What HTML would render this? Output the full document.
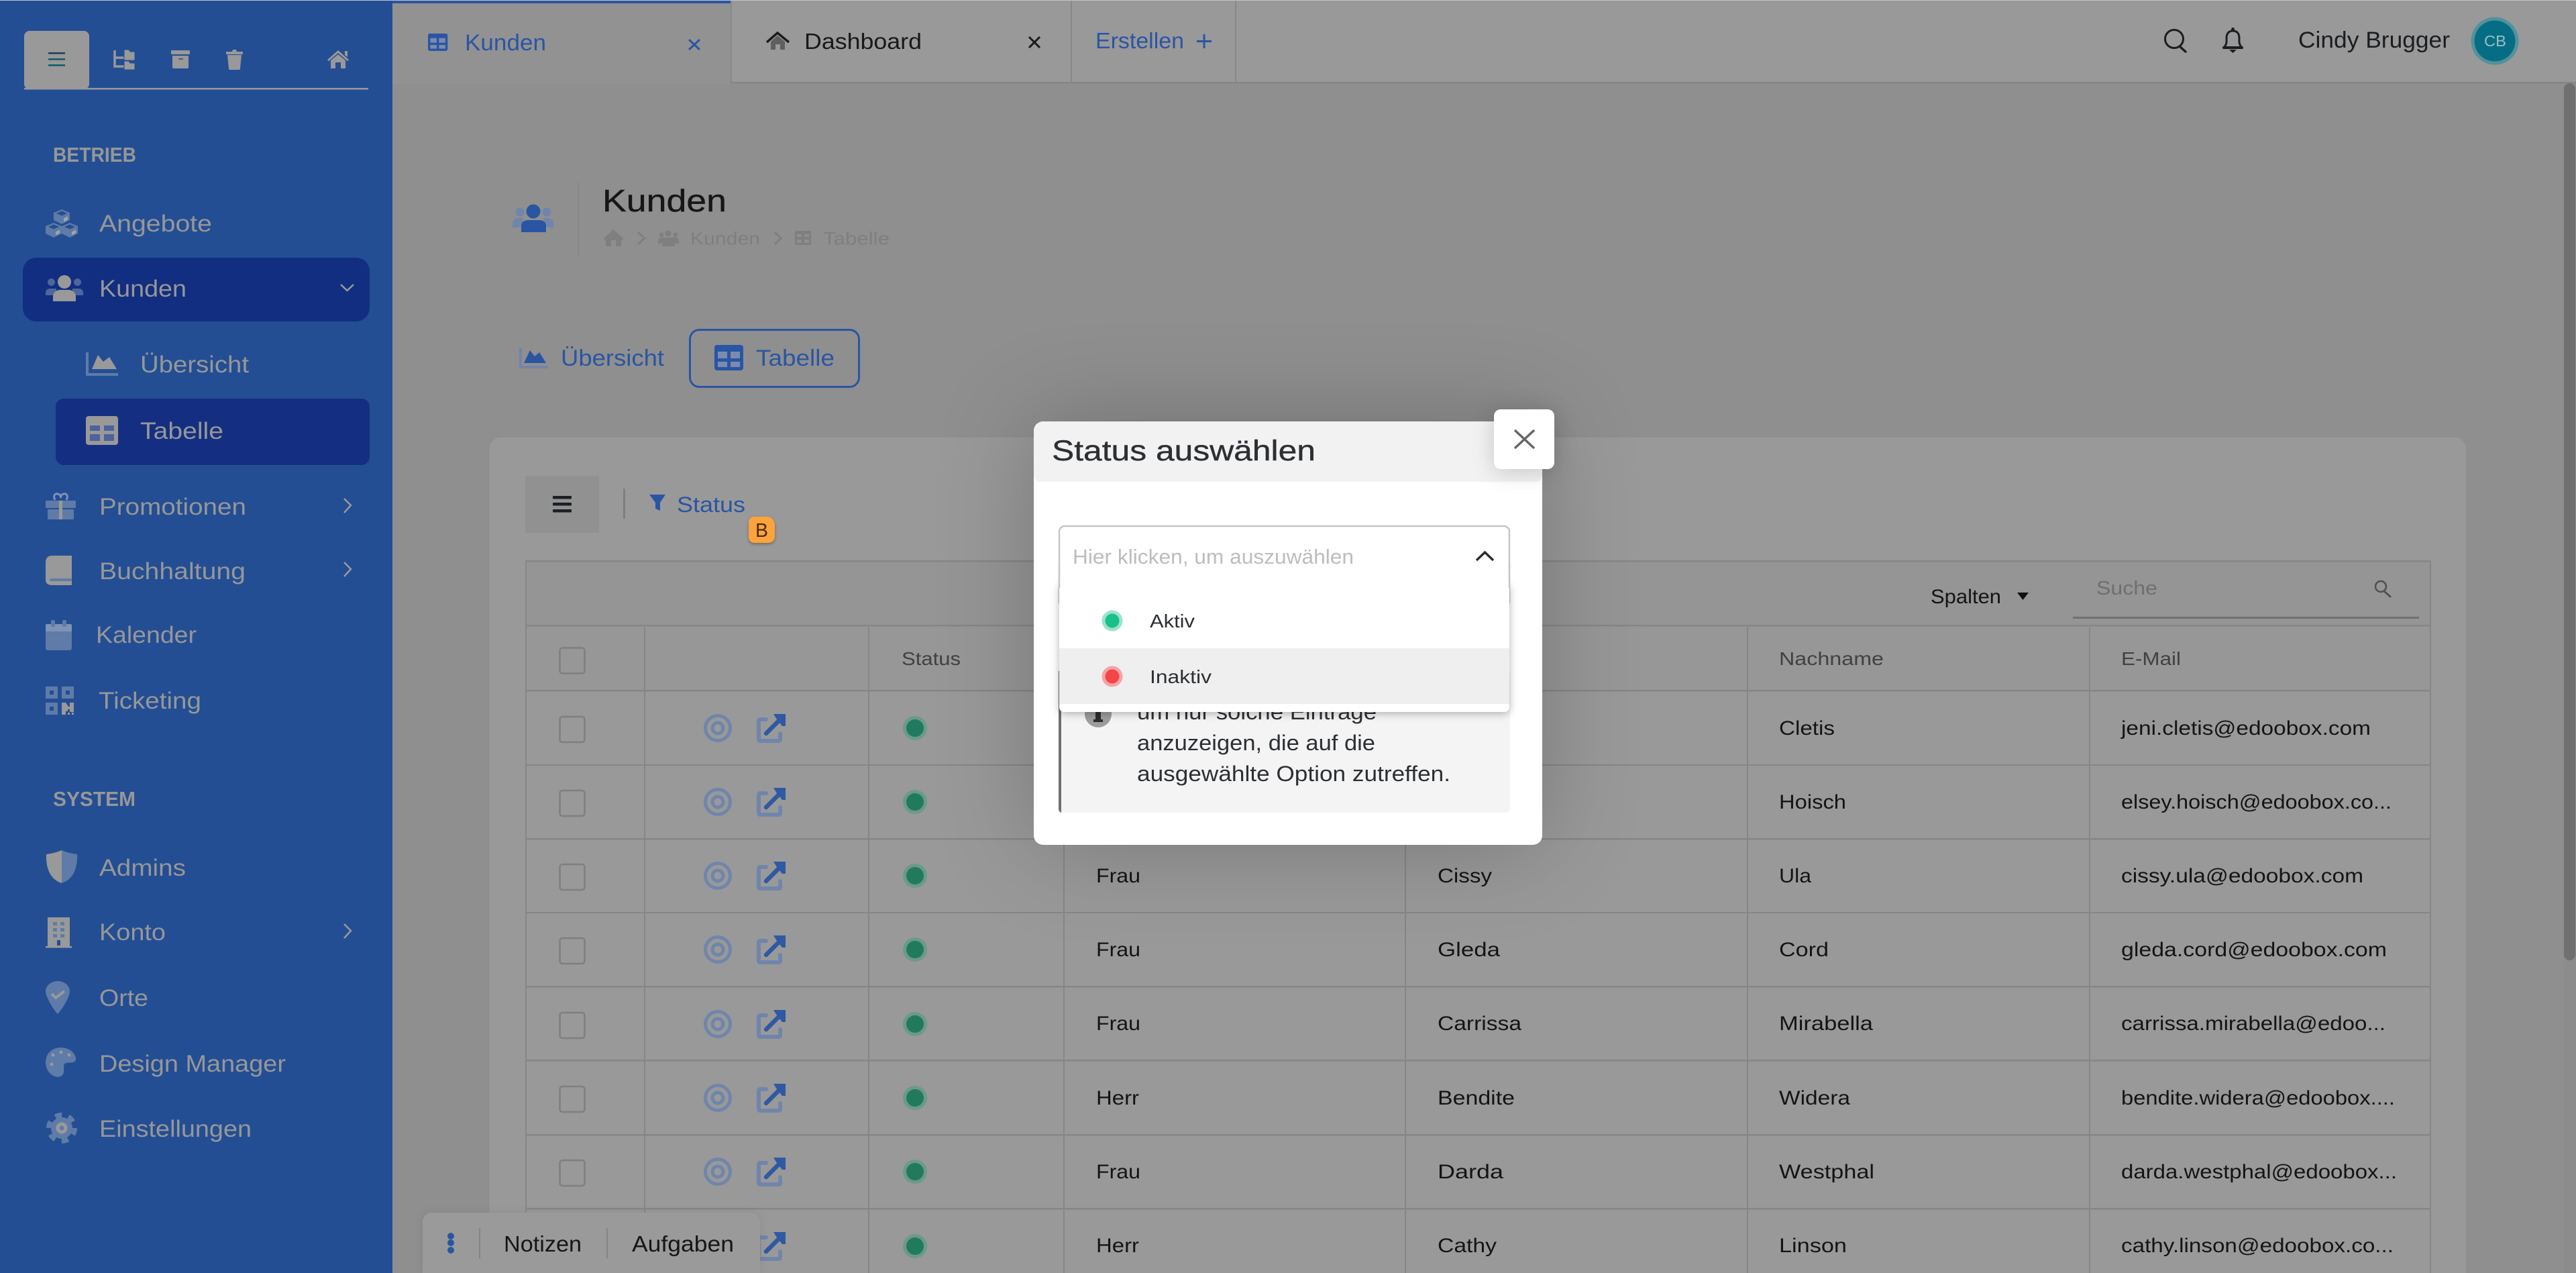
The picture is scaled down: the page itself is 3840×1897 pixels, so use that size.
<!DOCTYPE html>
<html lang="de">
<head>
<meta charset="utf-8">
<title>Kunden</title>
<style>
html,body{margin:0;padding:0;background:#8f8f8f;width:3840px;height:1897px;overflow:hidden}
svg{display:block;position:absolute;left:0;top:0}
text{font-family:"Liberation Sans",sans-serif;white-space:pre}
.s{font-size:35px;fill:#979797}
.h{font-size:31px;font-weight:bold;fill:#979797}
.t{font-size:30px;fill:#141414}
.b{fill:#2a55a3}
</style>
</head>
<body>
<svg width="3840" height="1897" viewBox="0 0 3840 1897" xmlns="http://www.w3.org/2000/svg">
<defs>
<g id="cube">
  <polygon points="12,0 24,5 24,16 12,22 0,16 0,5" fill="#5f7ba8"/>
  <polygon points="12,2.5 20,6 12,9.5 4,6" fill="#24508f"/>
  <polygon points="15,13.5 21,10.5 21,15.5 15,18.5" fill="#a5a5a5"/>
</g>
<g id="rowicons">
  <rect x="834.5" y="-17" width="37" height="38" rx="4" fill="none" stroke="#7f7f7f" stroke-width="2.5"/>
  <circle cx="1070" cy="0" r="18.5" fill="none" stroke="#7085ab" stroke-width="5"/>
  <circle cx="1070" cy="0" r="8" fill="none" stroke="#7085ab" stroke-width="5"/>
  <path d="M1142,-13H1133a2,2 0 0 0 -2,2V17a2,2 0 0 0 2,2H1161a2,2 0 0 0 2,-2V8" fill="none" stroke="#7085ab" stroke-width="6" stroke-linecap="round"/>
  <path d="M1142,8L1163,-13" fill="none" stroke="#2f59a2" stroke-width="6.5" stroke-linecap="round"/>
  <polygon points="1153,-21 1171,-21 1171,-3 1166,-3 1158,-13" fill="#2f59a2"/>
  <circle cx="1364" cy="0" r="18" fill="#6b9a88"/>
  <circle cx="1364" cy="0" r="13" fill="#227a5e"/>
</g>
<g id="tbl">
  <rect x="0" y="0" width="43" height="38" rx="4" fill="#2a55a3"/>
  <rect x="5" y="10" width="14" height="10" fill="#7a8cae"/><rect x="24" y="10" width="14" height="10" fill="#7a8cae"/>
  <rect x="5" y="25" width="14" height="8" fill="#7a8cae"/><rect x="24" y="25" width="14" height="8" fill="#7a8cae"/>
</g>
</defs>

<!-- page background -->
<rect width="3840" height="1897" fill="#8f8f8f"/>

<!-- top bar -->
<rect x="585" y="0" width="3255" height="122" fill="#999"/>
<rect x="585" y="122" width="3255" height="2.5" fill="#858585"/>
<rect x="585" y="0" width="504" height="125" fill="#929292"/>
<rect x="585" y="1" width="504" height="4" fill="#2a55a3"/>
<rect x="1089" y="0" width="2" height="122" fill="#888"/>
<rect x="1596" y="0" width="2" height="122" fill="#888"/>
<rect x="1841" y="0" width="2" height="122" fill="#888"/>

<use href="#tbl" transform="translate(638,50) scale(.68,.68)"/>
<text x="693" y="75" font-size="34" class="b" textLength="121" lengthAdjust="spacingAndGlyphs">Kunden</text>
<path d="M1027,59L1043,74M1043,59L1027,74" stroke="#2a55a3" stroke-width="3" fill="none"/>
<path d="M1143,63L1159,49L1176,63" fill="none" stroke="#1c1c1c" stroke-width="3.5"/>
<path d="M1149,62L1159,53L1170,62V74H1163V66H1156V74H1149Z" fill="#5f5f5f"/>
<text x="1199" y="73" font-size="33" fill="#191919" textLength="175" lengthAdjust="spacingAndGlyphs">Dashboard</text>
<path d="M1534,55L1550,71M1550,55L1534,71" stroke="#191919" stroke-width="3" fill="none"/>
<text x="1633" y="72" font-size="33" class="b" textLength="132" lengthAdjust="spacingAndGlyphs">Erstellen</text>
<path d="M1795,51V72M1784,61.5H1806" stroke="#2a55a3" stroke-width="3" fill="none"/>

<circle cx="3241" cy="58" r="13.5" fill="none" stroke="#1b1d20" stroke-width="3"/>
<path d="M3249,69L3258,77" stroke="#1b1d20" stroke-width="3.5" stroke-linecap="round"/>
<path d="M3315,71C3320,65 3319,62 3319,57C3319,49 3323,46 3328.500,46C3334,46 3338,49 3338,57C3338,62 3337,65 3342,71Z" fill="none" stroke="#1b1d20" stroke-width="3" stroke-linejoin="round"/>
<rect x="3313" y="69" width="31" height="4" rx="2" fill="#1b1d20"/>
<circle cx="3328.500" cy="43.500" r="2.500" fill="#1b1d20"/><path d="M3323,74H3334L3328.500,79Z" fill="#1b1d20"/>
<text x="3426" y="71" font-size="34" fill="#1b1d20" textLength="226" lengthAdjust="spacingAndGlyphs">Cindy Brugger</text>
<circle cx="3719" cy="61" r="35.500" fill="#54919c"/>
<circle cx="3719" cy="61" r="30.500" fill="#056e84"/>
<text x="3703" y="69" font-size="23" fill="#9cbcc4" textLength="33" lengthAdjust="spacingAndGlyphs">CB</text>

<!-- scrollbar -->
<rect x="3822" y="124" width="18" height="1773" fill="#8c8c8c"/>
<rect x="3822" y="124" width="17" height="1307" rx="8.500" fill="#707070"/>

<!-- page title -->
<circle cx="775" cy="316" r="6.500" fill="#7085ab"/><circle cx="815" cy="316" r="6.500" fill="#7085ab"/>
<path d="M764,340V333C764,328 768,325 772,325H780V337ZM825,340V333C825,328 821,325 817,325H810V337Z" fill="#7085ab"/>
<circle cx="795" cy="315" r="10.500" fill="#2a55a3"/>
<path d="M777,346V336C777,331 782,328 788,328H803C809,328 814,331 814,336V346Z" fill="#2a55a3"/>
<rect x="861" y="271" width="2" height="111" fill="#888"/>
<text x="898" y="315" font-size="46" fill="#161616" stroke="#161616" stroke-width=".4" textLength="185" lengthAdjust="spacingAndGlyphs">Kunden</text>

<path d="M899,356L914,342L930,356L926,358V367H918V358H911V367H903V358Z" fill="#7f7f7f"/>
<path d="M951,346L961,355L951,364" fill="none" stroke="#7f7f7f" stroke-width="3"/>
<circle cx="996" cy="348" r="4.500" fill="#7f7f7f"/><circle cx="986" cy="350" r="3.500" fill="#7f7f7f"/><circle cx="1007" cy="350" r="3.500" fill="#7f7f7f"/>
<path d="M981,364V358C981,355 984,354 987,354H1006C1009,354 1012,355 1012,358V364L1006,362V367H987V362Z" fill="#7f7f7f"/>
<text x="1029" y="364.500" font-size="27" fill="#7f7f7f" textLength="104" lengthAdjust="spacingAndGlyphs">Kunden</text>
<path d="M1155,346L1164,355L1155,364" fill="none" stroke="#7f7f7f" stroke-width="3"/>
<rect x="1185" y="344" width="24" height="21" rx="2" fill="#7f7f7f"/>
<path d="M1188,349H1195V353H1188ZM1199,349H1206V353H1199ZM1188,357H1195V362H1188ZM1199,357H1206V362H1199Z" fill="#8f8f8f"/>
<text x="1227" y="364.500" font-size="27" fill="#7f7f7f" textLength="99" lengthAdjust="spacingAndGlyphs">Tabelle</text>

<!-- sub tabs -->
<path d="M774,518H778V545H817V549H774Z" fill="#7085ab"/>
<path d="M781,541L790,522L797,531L804,525L814,541Z" fill="#2a55a3"/>
<text x="836" y="545" font-size="34" class="b" textLength="154" lengthAdjust="spacingAndGlyphs">Übersicht</text>
<rect x="1028.500" y="491.500" width="252" height="85" rx="14" fill="none" stroke="#2a55a3" stroke-width="3"/>
<use href="#tbl" transform="translate(1065,514)"/>
<text x="1127" y="545" font-size="34" class="b" textLength="117" lengthAdjust="spacingAndGlyphs">Tabelle</text>

<!-- card -->
<rect x="729" y="651" width="2948" height="1300" rx="18" fill="#999" stroke="#8c8c8c" stroke-width="1"/>

<rect x="783" y="709" width="110" height="85" fill="#919191"/>
<rect x="824" y="739" width="28" height="4.500" rx="1" fill="#1b1e22"/>
<rect x="824" y="749" width="28" height="4.500" rx="1" fill="#1b1e22"/>
<rect x="824" y="759" width="28" height="4.500" rx="1" fill="#1b1e22"/>
<rect x="929" y="728" width="3" height="45" fill="#7f7f7f"/>
<path d="M968,737H992L984,749V761L977,758V749Z" fill="#2a55a3"/>
<text x="1009" y="763" font-size="32" class="b" textLength="102" lengthAdjust="spacingAndGlyphs">Status</text>
<path d="M1125,772H1142C1150,772 1155,777 1155,785V801C1155,808 1150,811 1144,811H1125C1119,811 1116,807 1116,802V780C1116,775 1120,772 1125,772Z" fill="#4a3a1c" opacity=".5" style="filter:blur(2px)"/>
<path d="M1125,770H1142C1150,770 1155,775 1155,783V799C1155,806 1150,809 1144,809H1125C1119,809 1116,805 1116,800V778C1116,773 1120,770 1125,770Z" fill="#fba33d"/>
<text x="1126" y="800" font-size="29" fill="#4a2800" textLength="19" lengthAdjust="spacingAndGlyphs">B</text>

<!-- table -->
<rect x="785" y="836" width="2838" height="96" fill="#959595"/>
<rect x="785" y="932" width="2838" height="97" fill="#979797"/>
<g fill="#868686">
<rect x="784" y="835" width="2840" height="2.500"/>
<rect x="784" y="931" width="2840" height="2.500"/>
<rect x="784" y="1028" width="2840" height="2.500"/>
<rect x="784" y="1139" width="2840" height="2"/>
<rect x="784" y="1249" width="2840" height="2.500"/>
<rect x="784" y="1359" width="2840" height="2"/>
<rect x="784" y="1469" width="2840" height="2.500"/>
<rect x="784" y="1579" width="2840" height="2.500"/>
<rect x="784" y="1690" width="2840" height="2.500"/>
<rect x="784" y="1800" width="2840" height="2.500"/>
<rect x="783" y="835" width="2" height="1062"/>
<rect x="3622" y="835" width="2" height="1062"/>
<rect x="960" y="934" width="2" height="963"/>
<rect x="1294" y="934" width="2" height="963"/>
<rect x="1585" y="934" width="2" height="963"/>
<rect x="2094" y="934" width="2" height="963"/>
<rect x="2604" y="934" width="2" height="963"/>
<rect x="3114" y="934" width="2" height="963"/>
</g>

<text x="2878" y="899" class="t" fill="#111" textLength="105" lengthAdjust="spacingAndGlyphs">Spalten</text>
<path d="M3007,883H3024L3015.500,894Z" fill="#111"/>
<text x="3125" y="886" font-size="29" fill="#6f6f6f" textLength="91" lengthAdjust="spacingAndGlyphs">Suche</text>
<circle cx="3549" cy="874" r="8" fill="none" stroke="#505050" stroke-width="2.500"/>
<path d="M3554,881L3563,889" stroke="#505050" stroke-width="3" stroke-linecap="round"/>
<rect x="3090" y="919" width="516" height="3" fill="#707070"/>

<rect x="834.500" y="965.500" width="37" height="38" rx="4" fill="none" stroke="#7f7f7f" stroke-width="2.500"/>
<text x="1344" y="991" font-size="28" fill="#414141" textLength="88" lengthAdjust="spacingAndGlyphs">Status</text>
<text x="2652" y="991" font-size="28" fill="#414141" textLength="156" lengthAdjust="spacingAndGlyphs">Nachname</text>
<text x="3162" y="991" font-size="28" fill="#414141" textLength="89" lengthAdjust="spacingAndGlyphs">E-Mail</text>

<use href="#rowicons" y="1085"/><use href="#rowicons" y="1195"/><use href="#rowicons" y="1305"/><use href="#rowicons" y="1415"/>
<use href="#rowicons" y="1526"/><use href="#rowicons" y="1636"/><use href="#rowicons" y="1746"/><use href="#rowicons" y="1857"/>

<g class="rows">
<text class="t" x="2652" y="1095" textLength="83" lengthAdjust="spacingAndGlyphs">Cletis</text>
<text class="t" x="3162" y="1095" textLength="372" lengthAdjust="spacingAndGlyphs">jeni.cletis@edoobox.com</text>
<text class="t" x="2652" y="1205" textLength="100" lengthAdjust="spacingAndGlyphs">Hoisch</text>
<text class="t" x="3162" y="1205" textLength="403" lengthAdjust="spacingAndGlyphs">elsey.hoisch@edoobox.co...</text>

<text class="t" x="1634" y="1315" textLength="66" lengthAdjust="spacingAndGlyphs">Frau</text>
<text class="t" x="2143" y="1315" textLength="81" lengthAdjust="spacingAndGlyphs">Cissy</text>
<text class="t" x="2652" y="1315" textLength="48" lengthAdjust="spacingAndGlyphs">Ula</text>
<text class="t" x="3162" y="1315" textLength="361" lengthAdjust="spacingAndGlyphs">cissy.ula@edoobox.com</text>

<text class="t" x="1634" y="1425" textLength="66" lengthAdjust="spacingAndGlyphs">Frau</text>
<text class="t" x="2143" y="1425" textLength="93" lengthAdjust="spacingAndGlyphs">Gleda</text>
<text class="t" x="2652" y="1425" textLength="74" lengthAdjust="spacingAndGlyphs">Cord</text>
<text class="t" x="3162" y="1425" textLength="396" lengthAdjust="spacingAndGlyphs">gleda.cord@edoobox.com</text>

<text class="t" x="1634" y="1535" textLength="66" lengthAdjust="spacingAndGlyphs">Frau</text>
<text class="t" x="2143" y="1535" textLength="125" lengthAdjust="spacingAndGlyphs">Carrissa</text>
<text class="t" x="2652" y="1535" textLength="140" lengthAdjust="spacingAndGlyphs">Mirabella</text>
<text class="t" x="3162" y="1535" textLength="394" lengthAdjust="spacingAndGlyphs">carrissa.mirabella@edoo...</text>

<text class="t" x="1634" y="1646" textLength="64" lengthAdjust="spacingAndGlyphs">Herr</text>
<text class="t" x="2143" y="1646" textLength="115" lengthAdjust="spacingAndGlyphs">Bendite</text>
<text class="t" x="2652" y="1646" textLength="106" lengthAdjust="spacingAndGlyphs">Widera</text>
<text class="t" x="3162" y="1646" textLength="408" lengthAdjust="spacingAndGlyphs">bendite.widera@edoobox....</text>

<text class="t" x="1634" y="1756" textLength="66" lengthAdjust="spacingAndGlyphs">Frau</text>
<text class="t" x="2143" y="1756" textLength="98" lengthAdjust="spacingAndGlyphs">Darda</text>
<text class="t" x="2652" y="1756" textLength="142" lengthAdjust="spacingAndGlyphs">Westphal</text>
<text class="t" x="3162" y="1756" textLength="411" lengthAdjust="spacingAndGlyphs">darda.westphal@edoobox...</text>

<text class="t" x="1634" y="1866" textLength="64" lengthAdjust="spacingAndGlyphs">Herr</text>
<text class="t" x="2143" y="1866" textLength="88" lengthAdjust="spacingAndGlyphs">Cathy</text>
<text class="t" x="2652" y="1866" textLength="101" lengthAdjust="spacingAndGlyphs">Linson</text>
<text class="t" x="3162" y="1866" textLength="406" lengthAdjust="spacingAndGlyphs">cathy.linson@edoobox.co...</text>
</g>

<!-- bottom bar -->
<path d="M630,1897V1821a14,14 0 0 1 14,-14H1119a14,14 0 0 1 14,14V1897Z" fill="#9a9a9a" style="filter:drop-shadow(0 0 6px rgba(0,0,0,.08))"/>
<circle cx="672" cy="1842" r="5" fill="#2a55a3"/><circle cx="672" cy="1852" r="5" fill="#2a55a3"/><circle cx="672" cy="1863" r="5" fill="#2a55a3"/>
<rect x="714" y="1830" width="2" height="45" fill="#848484"/>
<text x="751" y="1865" font-size="33" fill="#161616" textLength="116" lengthAdjust="spacingAndGlyphs">Notizen</text>
<rect x="904" y="1830" width="2" height="45" fill="#848484"/>
<text x="942" y="1865" font-size="33" fill="#161616" textLength="152" lengthAdjust="spacingAndGlyphs">Aufgaben</text>

<!-- sidebar -->
<rect x="0" y="0" width="585" height="1897" fill="#234e94"/>
<rect x="36" y="46" width="97" height="87" rx="8" fill="#999"/>
<rect x="36" y="131" width="513" height="2.500" fill="#999"/>
<rect x="72" y="78" width="25" height="2.500" fill="#1d3d55"/><rect x="72" y="87" width="25" height="2.500" fill="#0f5a6a"/><rect x="72" y="96" width="25" height="2.500" fill="#0f5a6a"/>

<path d="M171,75V99H185M171,86H185" fill="none" stroke="#999" stroke-width="3.500"/>
<path d="M185,74H192L194,77H201V90H185ZM185,91H192L194,94H201V104H185Z" fill="#999" stroke="#234e94" stroke-width="1"/>
<rect x="255" y="75" width="28" height="6" rx="1" fill="#999"/>
<path d="M257,83H281V100a2,2 0 0 1 -2,2H259a2,2 0 0 1 -2,-2Z" fill="#999"/><rect x="266" y="87" width="7" height="1.500" fill="#234e94"/>
<path d="M337,77H346L347,74H352L353,77H362V81H337ZM339,82H360L358,102a2,2 0 0 1 -2,2H343a2,2 0 0 1 -2,-2Z" fill="#999"/>
<path d="M488,89L504,75L520,89L518,91L504,79L490,91Z" fill="#999"/>
<path d="M514,76H518V85L514,82ZM493,90L504,81L515,90V102H508V93H500V102H493Z" fill="#999"/>

<text class="h" x="79" y="241" textLength="124" lengthAdjust="spacingAndGlyphs">BETRIEB</text>

<use href="#cube" x="80" y="312"/><use href="#cube" x="68" y="332"/><use href="#cube" x="92" y="332"/>
<text class="s" x="148" y="345" textLength="168" lengthAdjust="spacingAndGlyphs">Angebote</text>

<rect x="34" y="384" width="517" height="95" rx="20" fill="#112e80"/>
<circle cx="76.500" cy="420.500" r="5.500" fill="#4e669c"/><circle cx="115.500" cy="420.500" r="5.500" fill="#4e669c"/>
<path d="M68,440V436C68,432 71,430 75,430H84V440ZM124,440V436C124,432 121,430 117,430H108V440Z" fill="#4e669c"/>
<circle cx="96" cy="420" r="10" fill="#999"/>
<path d="M79,449V442C79,436 84,432 90,432H102C108,432 113,436 113,442V449Z" fill="#999"/>
<text class="s" x="148" y="442" textLength="130" lengthAdjust="spacingAndGlyphs">Kunden</text>
<path d="M508,424L517.500,433L527,424" fill="none" stroke="#999" stroke-width="2.500"/>

<path d="M128,525H132V556H176V560H128Z" fill="#5f7ba8"/>
<path d="M137,550L146,529L154,539L163,532L174,550Z" fill="#999"/>
<text class="s" x="209" y="555" textLength="162" lengthAdjust="spacingAndGlyphs">Übersicht</text>

<rect x="83" y="594" width="468" height="99" rx="12" fill="#142f82"/>
<rect x="128" y="620" width="48" height="43" rx="4" fill="#999"/>
<rect x="134" y="634" width="15" height="8" fill="#4e629b"/><rect x="155" y="634" width="15" height="8" fill="#4e629b"/>
<rect x="134" y="647" width="15" height="10" fill="#4e629b"/><rect x="155" y="647" width="15" height="10" fill="#4e629b"/>
<text class="s" x="209" y="654" textLength="124" lengthAdjust="spacingAndGlyphs">Tabelle</text>

<!-- Promotionen -->
<path d="M82,745C78,737 84,733 90,738L90.500,742L91,738C97,733 103,737 99,745" fill="none" stroke="#7f93b6" stroke-width="3"/>
<rect x="68" y="746" width="45" height="11" rx="2" fill="#5f7ba8"/>
<rect x="71" y="759" width="39" height="15" rx="1" fill="#5f7ba8"/>
<rect x="88" y="746" width="5" height="28" fill="#999"/>
<text class="s" x="148" y="767" textLength="219" lengthAdjust="spacingAndGlyphs">Promotionen</text>
<path d="M513,743L523,753L513,764" fill="none" stroke="#999" stroke-width="2.500"/>

<!-- Buchhaltung -->
<path d="M78,828H107V872H78C71,872 68,869 68,864V838C68,832 71,828 78,828Z" fill="#999"/>
<rect x="74" y="862" width="33" height="4" rx="2" fill="#5f7ba8"/>
<text class="s" x="148" y="863" textLength="218" lengthAdjust="spacingAndGlyphs">Buchhaltung</text>
<path d="M513,838L523,848L513,859" fill="none" stroke="#999" stroke-width="2.500"/>

<!-- Kalender -->
<rect x="68" y="930" width="39" height="39" rx="3" fill="#5f7ba8"/>
<rect x="68" y="930" width="39" height="11" rx="2" fill="#7f93b6"/>
<rect x="76" y="924" width="6" height="10" rx="2" fill="#5f7ba8"/><rect x="93" y="924" width="6" height="10" rx="2" fill="#5f7ba8"/>
<text class="s" x="143" y="958" textLength="150" lengthAdjust="spacingAndGlyphs">Kalender</text>

<!-- Ticketing -->
<path fill-rule="evenodd" d="M68,1023H86V1041H68ZM74,1029V1035H80V1029ZM92,1023H110V1041H92ZM98,1029V1035H104V1029ZM68,1047H86V1065H68ZM74,1053V1059H80V1053Z" fill="#5f7ba8"/>
<path d="M92,1047H98L102,1053H104V1047H110V1061H104V1057H101V1060H98V1065H92Z" fill="#999"/>
<rect x="101" y="1062" width="3" height="3" fill="#999"/><rect x="107" y="1062" width="3" height="3" fill="#999"/>
<text class="s" x="147" y="1056" textLength="153" lengthAdjust="spacingAndGlyphs">Ticketing</text>

<text class="h" x="79" y="1201" textLength="123" lengthAdjust="spacingAndGlyphs">SYSTEM</text>

<!-- Admins -->
<path d="M92,1267V1316C78,1312 68,1298 69,1273C77,1272 85,1270 92,1267Z" fill="#999"/>
<path d="M92,1267V1316C106,1312 116,1298 115,1273C107,1272 99,1270 92,1267Z" fill="#5f7ba8"/>
<text class="s" x="148" y="1305" textLength="129" lengthAdjust="spacingAndGlyphs">Admins</text>

<!-- Konto -->
<rect x="71" y="1367" width="33" height="44" fill="#999"/><rect x="68" y="1410" width="39" height="2.500" fill="#999"/>
<g fill="#5f7ba8"><rect x="79" y="1374" width="6" height="5"/><rect x="90" y="1374" width="6" height="5"/><rect x="79" y="1383" width="6" height="5"/><rect x="90" y="1383" width="6" height="5"/><rect x="79" y="1392" width="6" height="5"/><rect x="90" y="1392" width="6" height="5"/></g>
<rect x="85" y="1401" width="5" height="8" fill="#234e94"/>
<text class="s" x="148" y="1401" textLength="99" lengthAdjust="spacingAndGlyphs">Konto</text>
<path d="M513,1377L523,1387L513,1398" fill="none" stroke="#999" stroke-width="2.500"/>

<!-- Orte -->
<path d="M86,1462C97,1462 104,1470 104,1477C104,1486 92,1505 86,1511C80,1505 68,1486 68,1477C68,1470 75,1462 86,1462Z" fill="#5f7ba8"/>
<path d="M77,1481L83,1487L96,1477" fill="none" stroke="#999" stroke-width="4"/>
<text class="s" x="148" y="1499" textLength="73" lengthAdjust="spacingAndGlyphs">Orte</text>

<!-- Design Manager -->
<path d="M90,1561C104,1561 113,1570 113,1578C113,1585 104,1583 99,1584C93,1585 96,1592 95,1598C94,1604 88,1606 82,1604C73,1601 68,1592 68,1583C68,1570 78,1561 90,1561Z" fill="#5f7ba8"/>
<circle cx="77" cy="1586" r="2.500" fill="#999"/><circle cx="79" cy="1572" r="2.500" fill="#999"/><circle cx="91" cy="1568" r="2.500" fill="#999"/><circle cx="103" cy="1572" r="2.500" fill="#999"/>
<text class="s" x="148" y="1597" textLength="278" lengthAdjust="spacingAndGlyphs">Design Manager</text>

<!-- Einstellungen -->
<circle cx="92" cy="1681" r="16" fill="#5f7ba8"/>
<circle cx="92" cy="1681" r="19" fill="none" stroke="#5f7ba8" stroke-width="8" stroke-dasharray="10 9.900"/>
<circle cx="92" cy="1681" r="8.500" fill="#999"/><circle cx="92" cy="1681" r="3.500" fill="#5f7ba8"/>
<text class="s" x="148" y="1694" textLength="227" lengthAdjust="spacingAndGlyphs">Einstellungen</text>

<!-- top highlight -->
<rect x="0" y="0" width="3840" height="1" fill="#c4c4c4"/>

<!-- modal -->
<rect x="1541" y="628" width="758" height="631" rx="14" fill="#fff" style="filter:drop-shadow(0 0 70px rgba(0,0,0,.22))"/>
<path d="M1541,718V642a14,14 0 0 1 14,-14H2285a14,14 0 0 1 14,14V708a10,10 0 0 1 -10,10H1551a10,10 0 0 1 -10,-10Z" fill="#f2f2f2"/>
<text x="1568" y="686" font-size="43" fill="#2c2f33" stroke="#2c2f33" stroke-width=".4" textLength="393" lengthAdjust="spacingAndGlyphs">Status auswählen</text>

<rect x="2227" y="610" width="90" height="89" rx="10" fill="#fff" style="filter:drop-shadow(0 4px 16px rgba(0,0,0,.18))"/>
<path d="M2258,641L2287,668M2287,641L2258,668" stroke="#666" stroke-width="3.500" fill="none"/>

<!-- select -->
<rect x="1579" y="784" width="671" height="120" rx="8" fill="#fff" stroke="#c6c6c6" stroke-width="2.500"/>
<text x="1599" y="840" font-size="31" fill="#bdbdbd" textLength="419" lengthAdjust="spacingAndGlyphs">Hier klicken, um auszuwählen</text>
<path d="M2201,835L2213.500,823L2226,835" fill="none" stroke="#2c2c2c" stroke-width="3.500"/>

<!-- info box -->
<rect x="1578" y="1000" width="673" height="211" rx="6" fill="#f4f4f4"/>
<path d="M1582,1000V1211H1584C1580,1211 1578,1209 1578,1205V1000Z" fill="#6f6f6f"/>
<circle cx="1637" cy="1064" r="20" fill="#9d9d9d"/>
<rect x="1633" y="1060" width="8" height="15" fill="#2e2e2e"/><rect x="1630" y="1072" width="14" height="4" fill="#2e2e2e"/>
<text x="1695" y="1072" font-size="32" fill="#2c2f33" textLength="357" lengthAdjust="spacingAndGlyphs">um nur solche Einträge</text>
<text x="1695" y="1118" font-size="32" fill="#2c2f33" textLength="355" lengthAdjust="spacingAndGlyphs">anzuzeigen, die auf die</text>
<text x="1695" y="1164" font-size="32" fill="#2c2f33" textLength="467" lengthAdjust="spacingAndGlyphs">ausgewählte Option zutreffen.</text>

<!-- dropdown -->
<path d="M1579,872H2250V1054a7,7 0 0 1 -7,7H1586a7,7 0 0 1 -7,-7Z" fill="#fff" style="filter:drop-shadow(0 2px 6px rgba(0,0,0,.3))"/>
<rect x="1579" y="860" width="671" height="20" fill="#fff"/>
<rect x="1577.750" y="840" width="2.500" height="36" fill="#c6c6c6"/><rect x="2248.750" y="840" width="2.500" height="36" fill="#c6c6c6"/>
<rect x="1579" y="966" width="671" height="83" fill="#efefef"/>
<circle cx="1658" cy="925" r="15.500" fill="#9ce2cb"/><circle cx="1658" cy="925" r="10.500" fill="#19c08a"/>
<text x="1714" y="935" font-size="28" fill="#2c2f33" textLength="67" lengthAdjust="spacingAndGlyphs">Aktiv</text>
<circle cx="1658" cy="1008" r="15.500" fill="#f4a3a6"/><circle cx="1658" cy="1008" r="10.500" fill="#f44548"/>
<text x="1714" y="1018" font-size="28" fill="#2c2f33" textLength="92" lengthAdjust="spacingAndGlyphs">Inaktiv</text>
</svg>
</body>
</html>
